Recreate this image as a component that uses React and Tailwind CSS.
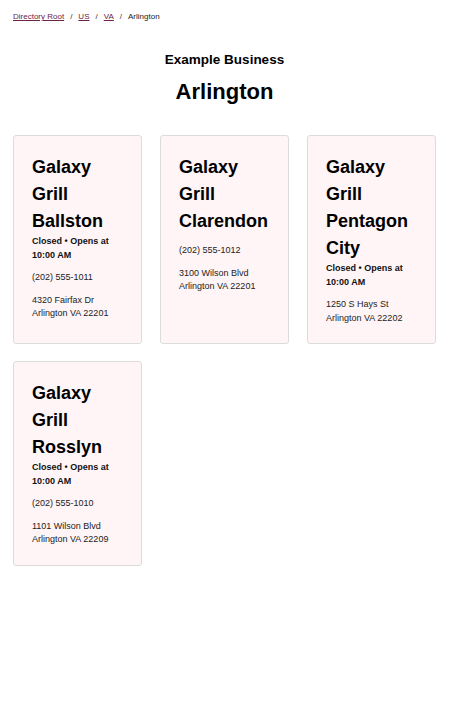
export default function App() {
  const cards = [
    { name: "Galaxy Grill Ballston", status: true, phone: "(202) 555-1011", addr: ["4320 Fairfax Dr", "Arlington VA 22201"] },
    { name: "Galaxy Grill Clarendon", status: false, phone: "(202) 555-1012", addr: ["3100 Wilson Blvd", "Arlington VA 22201"] },
    { name: "Galaxy Grill Pentagon City", status: true, phone: null, addr: ["1250 S Hays St", "Arlington VA 22202"] },
    { name: "Galaxy Grill Rosslyn", status: true, phone: "(202) 555-1010", addr: ["1101 Wilson Blvd", "Arlington VA 22209"] },
  ];
  return (
    <div className="min-h-[720px] bg-white pl-[13px] pr-[14px] pt-[11px] text-black" style={{ fontFamily: '"Liberation Sans", Arial, sans-serif' }}>
      <nav className="flex items-center text-[8px] leading-[12px]">
        <a href="#" className="text-[#6b2346] underline">Directory Root</a>
        <span className="mx-[6px] text-[#333]">/</span>
        <a href="#" className="text-[#6b2346] underline">US</a>
        <span className="mx-[6px] text-[#333]">/</span>
        <a href="#" className="text-[#6b2346] underline">VA</a>
        <span className="mx-[6px] text-[#333]">/</span>
        <span className="text-[#222]">Arlington</span>
      </nav>
      <h2 className="mt-[28px] text-center text-[13.5px] font-bold leading-[18px]">Example Business</h2>
      <h1 className="mt-[8px] text-center text-[22px] font-bold leading-[30px]">Arlington</h1>
      <div className="mt-[28px] grid grid-cols-3 gap-x-[18px] gap-y-[17px]">
        {cards.map((c) => (
          <div key={c.name} className="rounded-[3px] border border-[#dcdcdc] bg-[#fff5f7] pl-[18px] pr-4 pt-[18px] pb-[18px]">
            <h3 className="text-[18px] font-bold leading-[27px]">{c.name}</h3>
            {c.status && (
              <p className="text-[9px] font-bold leading-[13.5px] text-[#111]">Closed • Opens at 10:00 AM</p>
            )}
            {c.phone && (
              <p className="mt-[9px] text-[9px] leading-[13.5px] text-[#222]">{c.phone}</p>
            )}
            <p className="mt-[9px] text-[9px] leading-[13.5px] text-[#222]">
              {c.addr[0]}
              <br />
              {c.addr[1]}
            </p>
          </div>
        ))}
      </div>
    </div>
  );
}
